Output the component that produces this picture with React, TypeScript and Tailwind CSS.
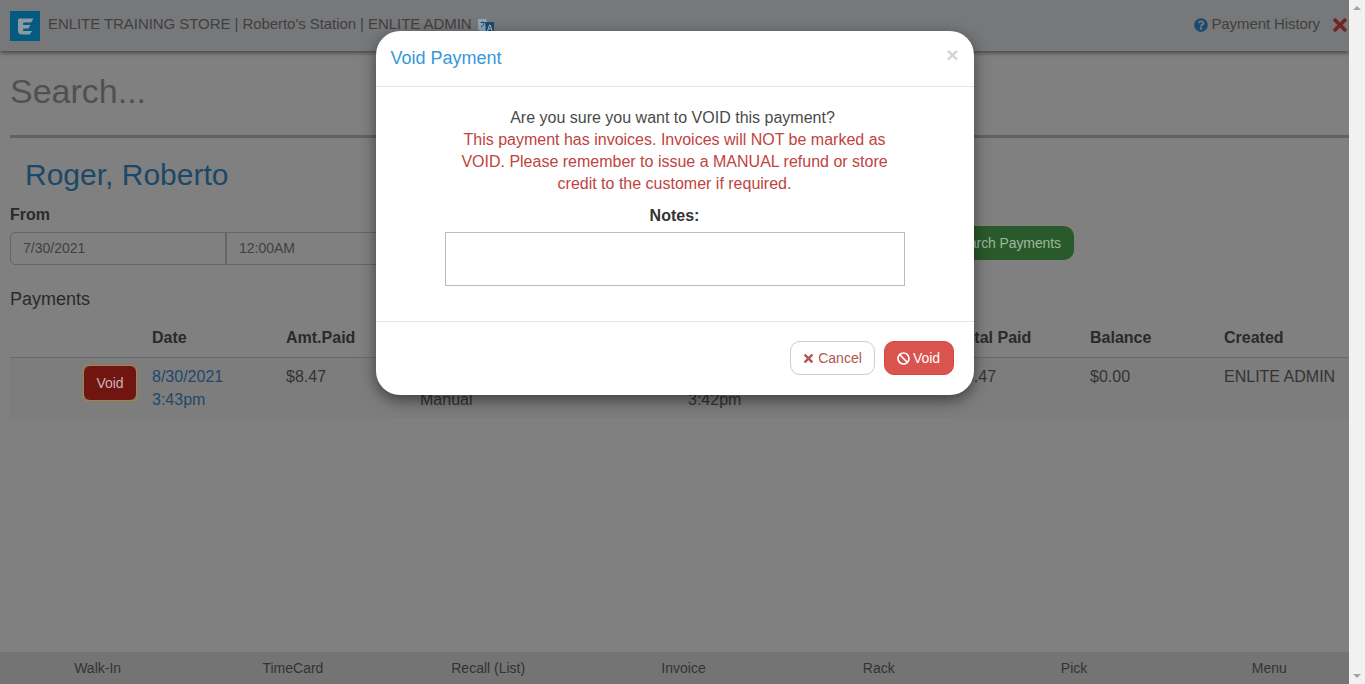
import { FaBan, FaQuestionCircle, FaTimes } from "react-icons/fa";

const NAV = ["Walk-In", "TimeCard", "Recall (List)", "Invoice", "Rack", "Pick", "Menu"];

function Logo() {
  return (
    <svg viewBox="0 0 30 30" className="w-[30px] h-[30px] shrink-0">
      <rect width="30" height="30" fill="#055a82" />
      <path
        d="M9 7.500h14.500l-2.400 4H13.200v2.600h7.200l-1.900 3.400h-5.300v2.400h9l-2.600 3.600H11.500c-2 0-3.500-1.400-3.500-3.400V9.500c0-1.200.5-2 1-2z"
        fill="#8b9aa3"
      />
    </svg>
  );
}

function TranslateIcon() {
  return (
    <svg viewBox="0 0 16 16" className="w-4 h-4 ml-[6px] shrink-0">
      <path d="M0 1h8l1 2v10H2L0 11z" fill="#8fa5b8" />
      <path d="M7 4h9v11H8z" fill="#1b4a70" />
      <path d="M2.500 4.500h4M4.500 3.500v1M3 9c2-1 2.800-2.500 3-4.500" stroke="#1b4a70" strokeWidth="1" fill="none" />
      <path d="M9.500 13l2-6h.7l2 6M10.300 11h3" stroke="#a9bfd0" strokeWidth="1" fill="none" />
    </svg>
  );
}

function Scrollbar() {
  return (
    <div className="w-4 shrink-0 bg-[#f1f1f1] flex flex-col items-center justify-between py-[6px]">
      <svg viewBox="0 0 8 4" className="w-2 h-1">
        <path d="M4 0l4 4H0z" fill="#a3a3a3" />
      </svg>
      <svg viewBox="0 0 8 4" className="w-2 h-1">
        <path d="M0 0h8L4 4z" fill="#a3a3a3" />
      </svg>
    </div>
  );
}

function VoidModal() {
  return (
    <div className="w-[598px] h-[364px] bg-white rounded-[24px] shadow-[0_5px_15px_rgba(0,0,0,0.5)] flex flex-col text-[#4a4a4a]">
      <div className="h-[56px] shrink-0 border-b border-[#e5e5e5] pl-[15px] pr-[15px] flex items-center justify-between">
        <h4 className="text-[18px] text-[#3498db]">Void Payment</h4>
        <span className="text-[21px] font-bold leading-none text-[#d4d4d4] mb-[8px]">×</span>
      </div>
      <div className="h-[235px] shrink-0 border-b border-[#e5e5e5] pt-[20px] flex flex-col items-center text-center text-[16px] leading-[22px]">
        <p className="pr-[4px]">Are you sure you want to VOID this payment?</p>
        <p className="w-[460px] text-[#c04440]">
          This payment has invoices. Invoices will NOT be marked as VOID. Please remember to issue a MANUAL refund or
          store credit to the customer if required.
        </p>
        <label className="font-bold text-[#333] mt-[10px]">Notes:</label>
        <textarea className="w-[460px] h-[54px] mt-[5px] border border-[#bbb] resize-none" />
      </div>
      <div className="flex-1 flex justify-end items-start gap-[9px] pt-[19px] pr-[20px] text-[14px]">
        <button className="w-[85px] h-[34px] border border-[#d9c9c9] rounded-[10px] bg-white text-[#b05552] flex items-center justify-center gap-[3px]">
          <FaTimes className="w-[13px] h-[13px]" />
          Cancel
        </button>
        <button className="w-[70px] h-[34px] border border-[#d9433f] rounded-[10px] bg-[#d9534f] text-white flex items-center justify-center gap-[3px]">
          <FaBan className="w-[13px] h-[13px]" />
          Void
        </button>
      </div>
    </div>
  );
}

export default function App() {
  return (
    <div className="h-screen flex overflow-hidden font-['Liberation_Sans',Arial,sans-serif]">
      <div className="relative flex-1 min-w-0 overflow-hidden bg-[#808080] flex flex-col text-[#2a2a2a]">
        <header className="h-[51px] shrink-0 bg-[#77787a] shadow-[0_2px_4px_rgba(0,0,0,0.45)] flex items-center pl-[10px]">
          <Logo />
          <span className="ml-2 mb-[2px] text-[15px] tracking-[-0.06px] text-[#404040] whitespace-nowrap">
            ENLITE TRAINING STORE | Roberto's Station | ENLITE ADMIN
          </span>
          <TranslateIcon />
          <div className="ml-auto flex items-center text-[15px] text-[#404040] mb-[2px]">
            <FaQuestionCircle className="w-[14px] h-[14px] text-[#1b4a70] mr-[3px]" />
            <span className="tracking-[-0.1px]">Payment History</span>
            <FaTimes className="w-[20px] h-[20px] text-[#702525] ml-[10px] mr-[-1px]" />
          </div>
        </header>

        <div className="flex-1 min-h-0 pl-[10px] pt-[20px] overflow-hidden">
          <div className="h-[67px] border-b-[3px] border-[#626262] text-[34px] leading-[40px] text-[#505050]">Search...</div>
          <h2 className="mt-[19px] ml-[15px] text-[30px] leading-[36px] text-[#1c4868]">Roger, Roberto</h2>

          <div className="mt-[11px] flex items-start">
            <div>
              <div className="text-[16px] leading-[22px] font-bold">From</div>
              <div className="mt-[6px] h-[33px] w-[580px] flex border border-[#666] rounded-[5px] text-[14px] text-[#404040]">
                <div className="w-[216px] pl-3 border-r-2 border-[#666] flex items-center">7/30/2021</div>
                <div className="pl-3 flex items-center">12:00AM</div>
              </div>
            </div>
            <button className="ml-[353px] mt-[22px] w-[131px] h-[34px] rounded-[10px] bg-[#2a5a2b] text-[14px] text-right pr-[13px] tracking-[-0.1px] text-[#9ab89b]">
              Search Payments
            </button>
          </div>

          <div className="mt-[24px] text-[18px] leading-[20px]">Payments</div>

          <div className="mt-[11px] w-[1340px] grid grid-cols-10 h-[38px] pb-[2px] items-center border-b border-[#6a6a6a] text-[16px] font-bold">
            <div />
            <div className="pl-2">Date</div>
            <div className="pl-2">Amt.Paid</div>
            <div />
            <div />
            <div />
            <div />
            <div className="pl-2">Total Paid</div>
            <div className="pl-2">Balance</div>
            <div className="pl-2">Created</div>
          </div>
          <div className="w-[1340px] grid grid-cols-10 h-[61px] pt-[7px] bg-[#7d7d7d] text-[16px] leading-[23px] text-[#333]">
            <div className="flex justify-end pr-[7px]">
              <button className="w-[54px] h-[36px] rounded-[2px] border border-[#a8823f] bg-[#777]">
                <span className="h-full rounded-[6px] bg-[#701510] text-[14px] text-[#c9b4b2] flex items-center justify-center">
                  Void
                </span>
              </button>
            </div>
            <div className="pl-2 text-[#21486c]">
              8/30/2021
              <br />
              3:43pm
            </div>
            <div className="pl-2">$8.47</div>
            <div className="pl-2">
              &nbsp;
              <br />
              Manual
            </div>
            <div />
            <div className="pl-2">
              &nbsp;
              <br />
              3:42pm
            </div>
            <div />
            <div className="pl-2">$8.47</div>
            <div className="pl-2">$0.00</div>
            <div className="pl-2 whitespace-nowrap">ENLITE ADMIN</div>
          </div>
        </div>

        <nav className="h-[32px] w-[1367px] shrink-0 bg-[#747474] grid grid-cols-7 items-center text-center text-[14px] text-[#333]">
          {NAV.map((n) => (
            <div key={n}>{n}</div>
          ))}
        </nav>

        <div className="absolute inset-0 flex justify-center items-start pt-[31px]">
          <VoidModal />
        </div>
      </div>
      <Scrollbar />
    </div>
  );
}
